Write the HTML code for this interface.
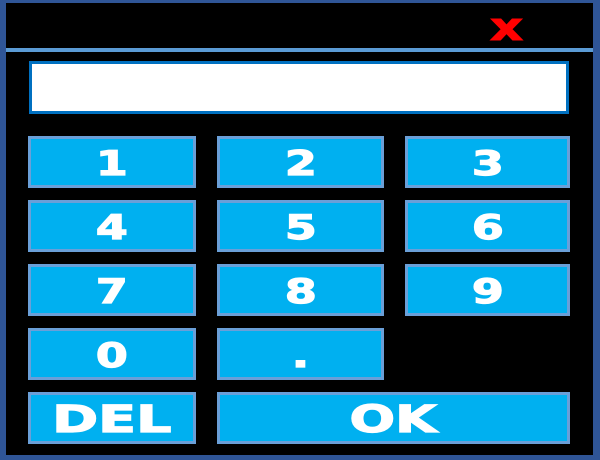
<!DOCTYPE html>
<html><head><style>
html,body{margin:0;padding:0;background:#2f5597;}
body{width:600px;height:460px;position:relative;overflow:hidden;}
.frame{position:absolute;left:6px;top:3px;width:587px;height:452px;background:#000;}
.sep{position:absolute;left:6px;top:48px;width:587px;height:4px;background:#5b9bd5;}
.x{position:absolute;left:490px;top:9px;color:#f00;font:bold 38px "DejaVu Sans",sans-serif;transform:scaleX(1.35);transform-origin:left;line-height:36px;-webkit-text-stroke:1px #f00;}
.inp{position:absolute;left:29px;top:61px;width:534px;height:47px;background:#fff;border:3px solid #0070c0;}
.b{position:absolute;box-sizing:border-box;background:#00b0f0;border:3px solid #6a9fd8;color:#fff;font:bold 34px "DejaVu Sans",sans-serif;display:flex;align-items:center;justify-content:center;-webkit-text-stroke:1.2px #fff;padding-top:3px;}
.b span{display:inline-block;transform:scaleX(1.35);}
</style></head><body>
<div class="frame"></div>
<div class="sep"></div>
<div class="x">x</div>
<div class="inp"></div>
<div class="b" style="left:28px;top:136px;width:168px;height:52px"><span>1</span></div>
<div class="b" style="left:217px;top:136px;width:167px;height:52px"><span>2</span></div>
<div class="b" style="left:405px;top:136px;width:165px;height:52px"><span>3</span></div>
<div class="b" style="left:28px;top:200px;width:168px;height:52px"><span>4</span></div>
<div class="b" style="left:217px;top:200px;width:167px;height:52px"><span>5</span></div>
<div class="b" style="left:405px;top:200px;width:165px;height:52px"><span>6</span></div>
<div class="b" style="left:28px;top:264px;width:168px;height:52px"><span>7</span></div>
<div class="b" style="left:217px;top:264px;width:167px;height:52px"><span>8</span></div>
<div class="b" style="left:405px;top:264px;width:165px;height:52px"><span>9</span></div>
<div class="b" style="left:28px;top:328px;width:168px;height:52px"><span>0</span></div>
<div class="b" style="left:217px;top:328px;width:167px;height:52px"><span>.</span></div>
<div class="b" style="left:28px;top:392px;width:168px;height:52px;font-size:37px"><span style="transform:scaleX(1.5)">DEL</span></div>
<div class="b" style="left:217px;top:392px;width:353px;height:52px;font-size:37px"><span style="transform:scaleX(1.45)">OK</span></div>
</body></html>
